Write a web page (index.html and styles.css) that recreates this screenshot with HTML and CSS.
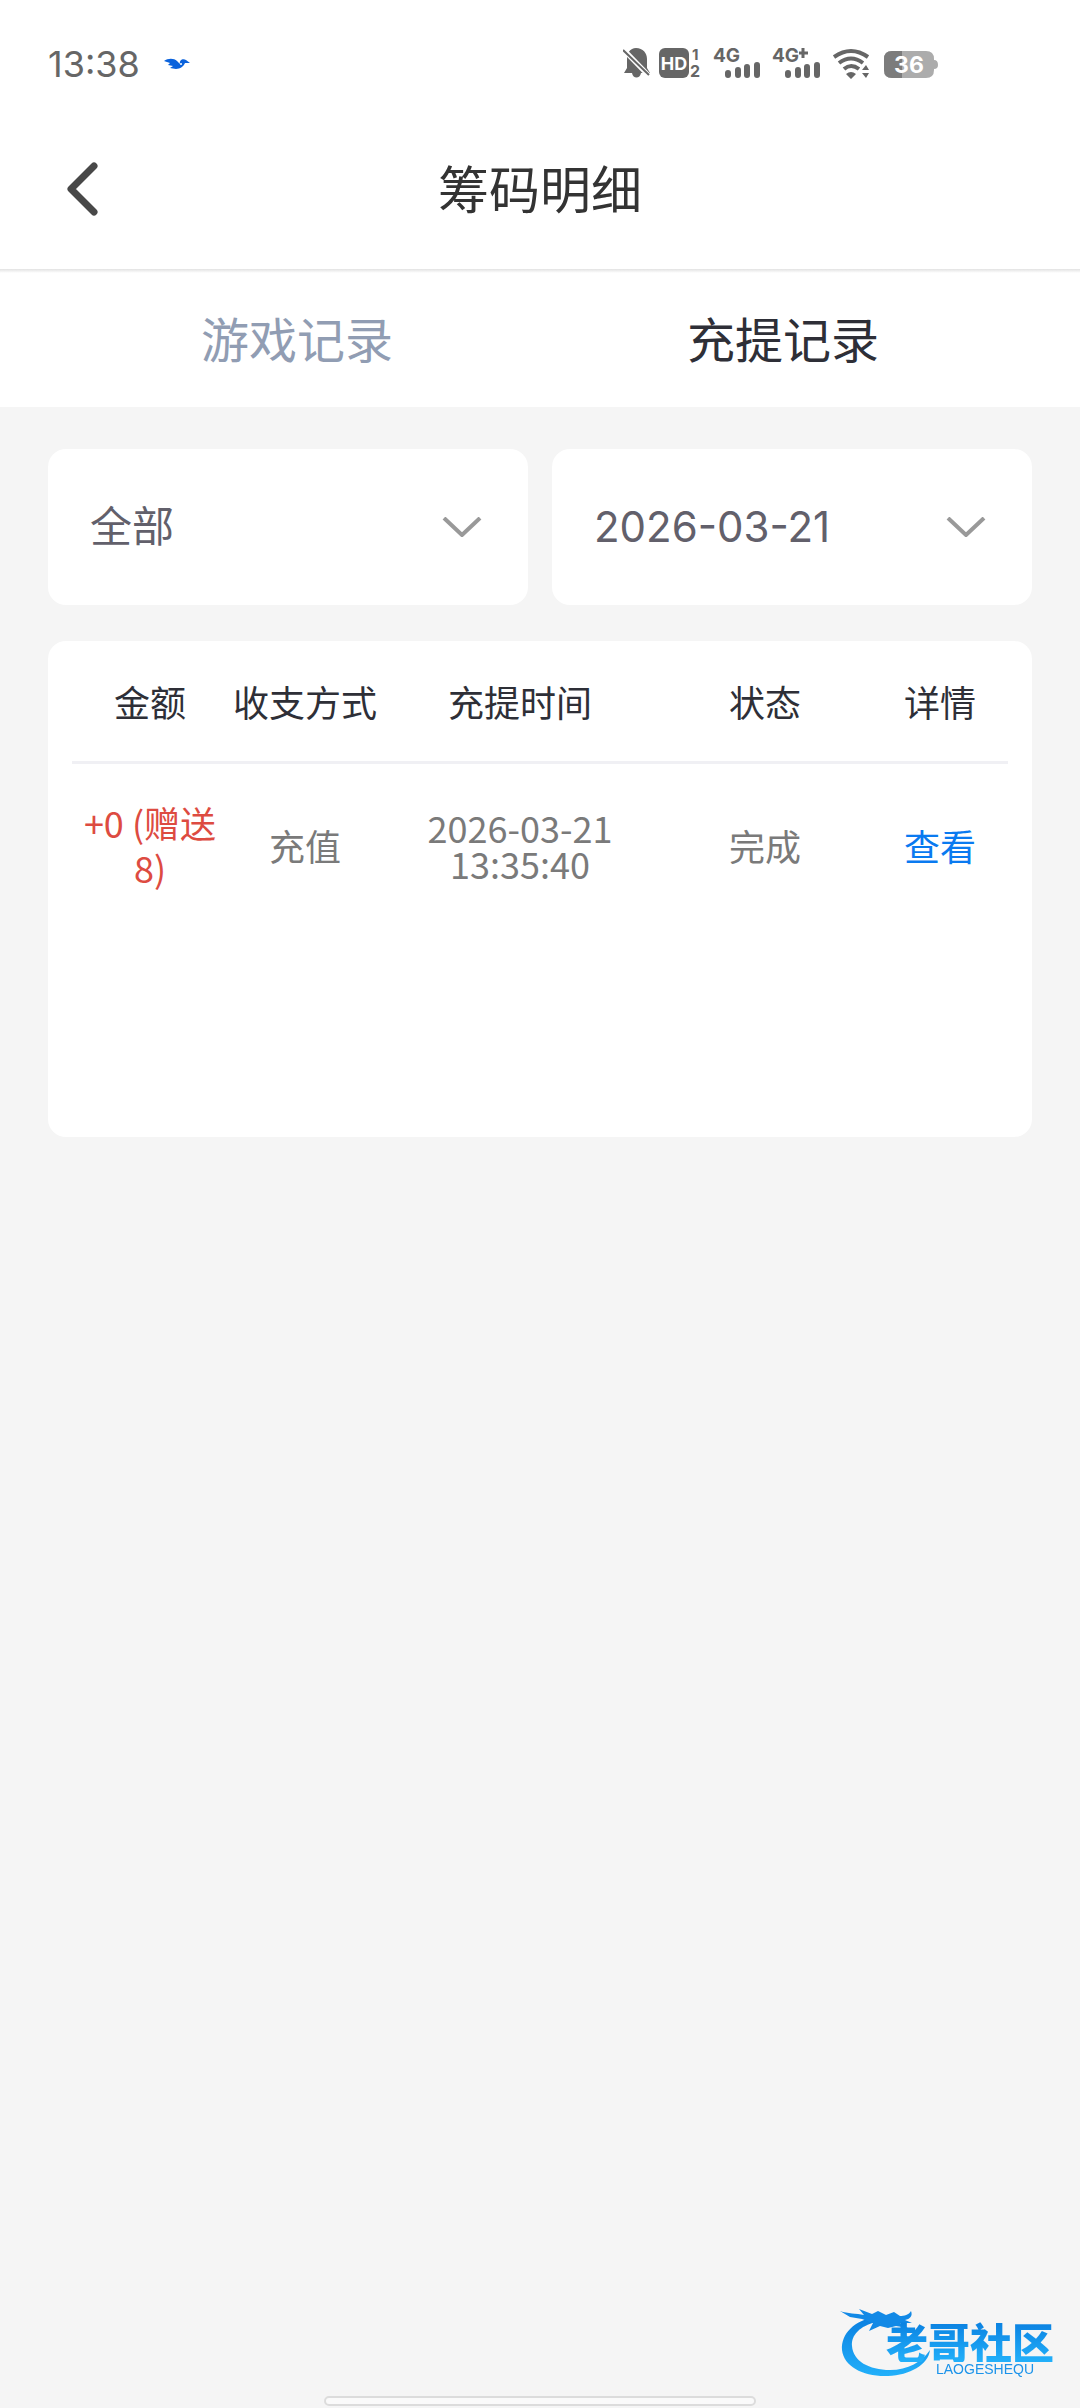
FILE: index.html
```html
<!DOCTYPE html>
<html lang="zh-CN">
<head>
    <meta charset="UTF-8">
    <meta name="viewport" content="width=device-width, initial-scale=1.0">
    <title>筹码明细</title>
    <link rel="stylesheet" href="styles.css">
</head>
<body>
    <div class="status-bar">
        <span class="time">13:38</span>
        <svg class="bird" width="26" height="12" viewBox="0 0 26 12" fill="#0a62dc">
            <path d="M0 3C4 0 10 0 13 3L16 6C15 2 19 0 22 2L26 5L21 5C20 8 16 11 12 11L6 10L9 8L4 7L6 5Z"/>
            <circle cx="17" cy="6" r="1" fill="#fff"/>
        </svg>
        <div class="status-icons">
            <svg width="30" height="32" viewBox="0 0 30 32">
                <path d="M13 0C20 0 24 5 24 11V20L27 25H1L4 20V11C4 5 7 0 13 0ZM9 25H18C17 31 10 31 9 25Z" fill="#666"/>
                <path d="M-1 0L27 29" stroke="#fff" stroke-width="5"/>
                <path d="M0 2L26 27" stroke="#666" stroke-width="2"/>
            </svg>
            <svg class="glyph" width="48" height="32" viewBox="0 0 48 32">
                <rect width="30" height="30" rx="6" fill="#666"/>
                <text x="15" y="22" font-size="18" text-anchor="middle" fill="#fff">HD</text>
                <text x="33" y="12" font-size="15">1</text>
                <text x="31" y="29" font-size="16">2</text>
            </svg>
            <svg class="glyph" width="54" height="32" viewBox="0 0 54 32">
                <text x="0" y="14" font-size="19">4G</text>
                <path d="M15 25V27M25 22V27M34 19V27M44 17V27" stroke="#666" stroke-width="6" stroke-linecap="round"/>
            </svg>
            <svg class="glyph" width="54" height="32" viewBox="0 0 54 32">
                <text x="-1" y="14" font-size="19">4G</text>
                <path d="M26 5H35M30 0V10" stroke="#666" stroke-width="3"/>
                <path d="M15 25V27M25 22V27M34 19V27M44 17V27" stroke="#666" stroke-width="6" stroke-linecap="round"/>
            </svg>
            <svg width="45" height="32" viewBox="0 0 45 32">
                <path d="M1 9Q18 -3 35 9M6 15Q18 6 30 15M11 21Q18 15 26 21" fill="none" stroke="#666" stroke-width="4"/>
                <path d="M13 26Q18 22 23 26L18 31ZM29 22L33 17L36 22ZM29 25H36L33 30Z" fill="#666"/>
            </svg>
            <svg class="glyph" width="55" height="32" viewBox="0 0 55 32">
                <path d="M8 3H42Q50 3 50 11V12Q54 12 54 17Q54 21 50 21V22Q50 30 42 30H8Q0 30 0 22V11Q0 3 8 3Z" fill="#acacac"/>
                <path d="M18 3H8Q0 3 0 11V22Q0 30 8 30H18Z" fill="#7c7c7c"/>
                <text x="25" y="25" font-size="23" text-anchor="middle" fill="#fff">36</text>
            </svg>
        </div>
    </div>

    <header class="header">
        <button class="back" aria-label="返回">
            <svg width="33" height="56" viewBox="0 0 33 56" fill="none" stroke="#484848" stroke-width="7" stroke-linecap="round" stroke-linejoin="round">
                <path d="M27 5L4 28L27 51"/>
            </svg>
        </button>
        <h1>筹码明细</h1>
    </header>

    <nav class="tabs">
        <a href="#game">游戏记录</a>
        <a href="#recharge" class="active">充提记录</a>
    </nav>

    <main class="content">
        <div class="filters">
            <div class="filter">
                <select aria-label="类型">
                    <option>全部</option>
                </select>
                <svg width="40" height="20" viewBox="0 0 40 20" fill="none" stroke="#999" stroke-width="4">
                    <path d="M2 1L20 18L38 1"/>
                </svg>
            </div>
            <div class="filter">
                <select aria-label="日期">
                    <option>2026-03-21</option>
                </select>
                <svg width="40" height="20" viewBox="0 0 40 20" fill="none" stroke="#999" stroke-width="4">
                    <path d="M2 1L20 18L38 1"/>
                </svg>
            </div>
        </div>

        <div class="card">
            <table>
                <colgroup>
                    <col class="col-amount">
                    <col class="col-method">
                    <col class="col-time">
                    <col class="col-status">
                    <col class="col-detail">
                </colgroup>
                <thead>
                    <tr>
                        <th>金额</th>
                        <th>收支方式</th>
                        <th>充提时间</th>
                        <th>状态</th>
                        <th>详情</th>
                    </tr>
                </thead>
                <tbody>
                    <tr>
                        <td class="amount">+0 (赠送8)</td>
                        <td>充值</td>
                        <td class="date">2026-03-21<br>13:35:40</td>
                        <td>完成</td>
                        <td><a href="#detail">查看</a></td>
                    </tr>
                </tbody>
            </table>
        </div>
    </main>

    <div class="watermark">
        <svg width="92" height="72" viewBox="0 0 92 72">
            <defs>
                <linearGradient id="ring" x1="0" y1="0" x2="0" y2="1">
                    <stop offset="0" stop-color="#0a7fe0"/>
                    <stop offset="1" stop-color="#22b0fa"/>
                </linearGradient>
            </defs>
            <path d="M36 9C14 12 1 26 2 42C4 59 24 69 48 68C70 67 88 57 90 42C82 54 68 62 50 62C29 62 13 53 12 38C11 27 20 18 36 14Z" fill="url(#ring)"/>
            <path d="M0 3C8 6 16 5 24 7L19 1L32 6L38 3L46 7L54 4L60 8C64 8 69 7 71 3C73 8 70 11 65 12L72 15L60 15L68 20L56 18L48 20L40 18L29 23L33 15L22 11L10 9Z" fill="#1289e6"/>
        </svg>
        <div class="brand">
            <strong>老哥社区</strong>
            <small>LAOGESHEQU</small>
        </div>
    </div>
    <div class="home-bar"></div>
</body>
</html>
```
FILE: styles.css
```css
* {
    box-sizing: border-box;
}
body {
    margin: 0;
    min-height: 100vh;
    background-color: #f5f5f5;
    font-family: "Noto Sans CJK SC", sans-serif;
    color: #333;
}
.status-bar {
    display: flex;
    align-items: center;
    height: 108px;
    padding: 20px 141px 0 48px;
    background-color: #fff;
}
.time {
    font-family: Inter, sans-serif;
    font-size: 36px;
    color: #666;
}
.bird {
    margin-left: 24px;
}
.status-icons {
    display: flex;
    gap: 6px;
    margin-left: auto;
}
.glyph {
    overflow: visible;
    font-family: Inter, sans-serif;
    font-weight: 700;
    fill: #666;
}
.header {
    display: grid;
    grid-template-columns: 100px 1fr 100px;
    align-items: center;
    height: 161px;
    background-color: #fff;
}
.back {
    display: flex;
    justify-content: flex-end;
    padding: 0;
    border: none;
    background: none;
    cursor: pointer;
}
h1 {
    margin: 0;
    padding-bottom: 4px;
    font-size: 51px;
    font-weight: 400;
    line-height: 72px;
    text-align: center;
}
.tabs {
    display: flex;
    height: 138px;
    padding: 0 54px;
    background: linear-gradient(#e2e2e2, #fff 4px);
}
.tabs a {
    flex: 1;
    line-height: 136px;
    font-size: 48px;
    text-align: center;
    text-decoration: none;
    color: #919db3;
}
.tabs .active {
    color: #2e2f37;
}
.content {
    padding: 42px 48px;
}
.filters {
    display: flex;
    gap: 24px;
    margin-bottom: 36px;
}
.filter {
    display: flex;
    flex: 1;
    align-items: center;
    height: 156px;
    padding: 0 46px 0 42px;
    border-radius: 18px;
    background-color: #fff;
}
.filter select {
    flex: 1;
    height: 100%;
    padding: 0 0 2px;
    border: none;
    appearance: none;
    background: none;
    font-family: Inter, "Noto Sans CJK SC", sans-serif;
    font-size: 42px;
    color: #62606b;
}
.card {
    min-height: 496px;
    padding: 0 24px;
    border-radius: 18px;
    background-color: #fff;
}
table {
    width: 100%;
    table-layout: fixed;
    border-collapse: collapse;
    font-size: 36px;
    text-align: center;
}
.col-amount {
    width: 156px;
}
.col-method {
    width: 154px;
}
.col-time {
    width: 276px;
}
.col-status {
    width: 214px;
}
.col-detail {
    width: 136px;
}
th {
    height: 121px;
    padding: 0;
    border-bottom: 3px solid #f0f0f4;
    font-weight: 400;
    color: #2e2f37;
}
td {
    height: 164px;
    padding: 0;
    color: #7a7a7a;
}
td.amount {
    padding: 0 10px;
    line-height: 45px;
    color: #dd4b41;
}
td.date {
    line-height: 36px;
}
td a {
    color: #0a7af0;
    text-decoration: none;
}
.watermark {
    position: fixed;
    right: 26px;
    bottom: 28px;
    display: flex;
    align-items: flex-end;
}
.brand {
    display: flex;
    flex-direction: column;
    margin-left: -46px;
    padding-bottom: 4px;
    color: #1b93ea;
}
.brand strong {
    background: linear-gradient(#0a7fe0, #22b0fa);
    background-clip: text;
    font-size: 42px;
    font-weight: 900;
    line-height: 42px;
    color: transparent;
}
.brand small {
    margin-left: 50px;
    font-family: "Liberation Sans", sans-serif;
    font-size: 14px;
    line-height: 14px;
}
.home-bar {
    position: fixed;
    bottom: 2px;
    left: 30%;
    right: 30%;
    height: 10px;
    border: 2px solid #dcdcdc;
    border-radius: 5px;
    background-color: #fafafa;
}
```
